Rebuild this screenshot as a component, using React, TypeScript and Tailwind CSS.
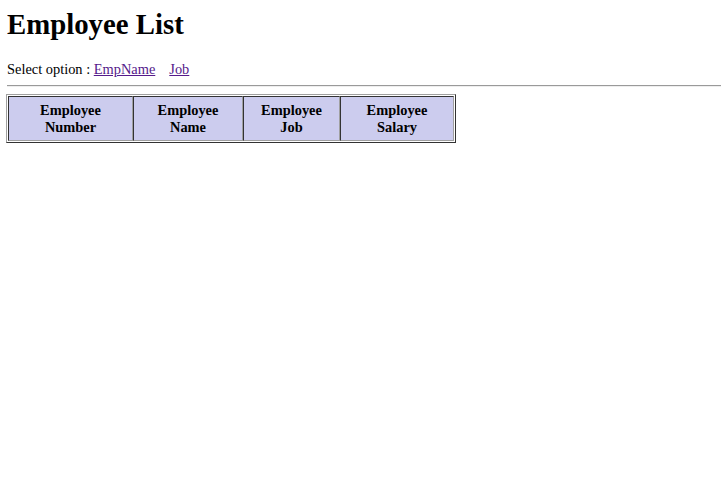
export default function App() {
  const headers = [
    { top: "Employee", bottom: "Number", w: "w-[125px]" },
    { top: "Employee", bottom: "Name", w: "w-[110px]" },
    { top: "Employee", bottom: "Job", w: "w-[97px]" },
    { top: "Employee", bottom: "Salary", w: "w-[114px]" },
  ];

  return (
    <div className="min-h-[501px] bg-white pl-[7px] pt-[8px] text-black font-['Liberation_Serif','Times_New_Roman',serif]">
      <h1 className="text-[28.8px] font-bold leading-[33px]">Employee List</h1>

      <p className="mt-[20px] text-[14.4px] leading-[17px]">
        Select option :{" "}
        <a href="#" className="text-[#551a8b] underline">
          EmpName
        </a>
        <a href="#" className="ml-[14px] text-[#551a8b] underline">
          Job
        </a>
      </p>

      <hr className="mt-[7px] mr-[1px] border-0 border-t border-t-[#9a9a9a] border-b border-b-[#eeeeee]" />

      <div className="mt-[7px] -ml-[1px] inline-block border border-t-[#a0a0a0] border-l-[#a0a0a0] border-r-[#333333] border-b-[#333333] p-[1px]">
        <table className="border-separate border-spacing-0">
          <thead>
            <tr>
              {headers.map((h) => (
                <th
                  key={h.bottom}
                  className={`${h.w} h-[45px] border border-t-[#333333] border-l-[#333333] border-r-[#a0a0a0] border-b-[#a0a0a0] bg-[#ccccee] text-center align-middle text-[14.4px] font-bold leading-[17px]`}
                >
                  {h.top}
                  <br />
                  {h.bottom}
                </th>
              ))}
            </tr>
          </thead>
        </table>
      </div>
    </div>
  );
}
